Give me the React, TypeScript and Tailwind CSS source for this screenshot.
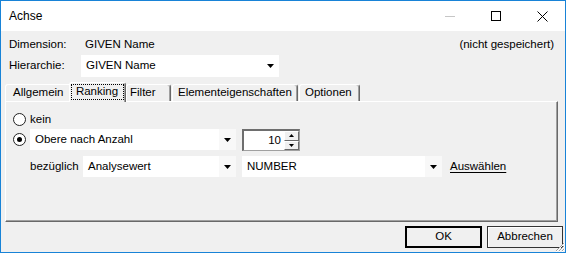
import React from "react";

function Arrow() {
  return (
    <svg width="7" height="4" viewBox="0 0 7 4">
      <path d="M0 0H7L3.5 4Z" fill="#000" />
    </svg>
  );
}

function Combo({ w, text, gray }: { w: string; text: string; gray?: boolean }) {
  return (
    <div className={`${w} h-full bg-white flex items-center`}>
      <span className="pl-[5px] flex-1 truncate">{text}</span>
      <div
        className={`w-[17px] h-full flex items-center justify-center ${
          gray ? "bg-[#f8f8f8]" : "bg-white"
        }`}
      >
        <Arrow />
      </div>
    </div>
  );
}

function Radio({ checked }: { checked?: boolean }) {
  return (
    <div className="w-[13px] h-[13px] rounded-full border border-[#222] bg-white flex items-center justify-center shrink-0">
      {checked && <div className="w-[5px] h-[5px] rounded-full bg-black" />}
    </div>
  );
}

function SpinBtn({ up }: { up?: boolean }) {
  return (
    <div className="flex-1 bg-[#f0f0f0] border-t border-l border-white border-b border-r border-b-[#696969] border-r-[#696969] flex items-center justify-center">
      <svg width="5" height="3" viewBox="0 0 5 3">
        {up ? <path d="M0 3H5L2.5 0Z" fill="#000" /> : <path d="M0 0H5L2.5 3Z" fill="#000" />}
      </svg>
    </div>
  );
}

export default function App() {
  const tab =
    "h-[17px] flex items-center border-t border-l border-white border-r border-r-[#696969] shadow-[inset_-1px_0_0_#a0a0a0] rounded-t-[3px] bg-[#f0f0f0]";
  return (
    <div className="w-[566px] h-[253px] border border-[#1883d7] bg-[#f0f0f0] flex flex-col relative overflow-hidden text-[11.5px] leading-none text-black font-['Liberation_Sans',Arial,sans-serif]">
      {/* Title bar */}
      <div className="h-[30px] bg-white flex items-center shrink-0">
        <span className="pl-[8px] text-[12px]">Achse</span>
        <div className="ml-auto flex h-full">
          <div className="w-[46px] h-full flex items-center justify-center">
            <div className="w-[10px] h-px bg-[#c6c6c6]" />
          </div>
          <div className="w-[46px] h-full flex items-center justify-center">
            <div className="w-[10px] h-[10px] border border-black" />
          </div>
          <div className="w-[46px] h-full flex items-center justify-center">
            <svg width="11" height="11" viewBox="0 0 11 11">
              <path d="M0.5 0.5L10.5 10.5M10.5 0.5L0.5 10.5" stroke="#000" strokeWidth="1" />
            </svg>
          </div>
        </div>
      </div>

      {/* Body */}
      <div className="flex-1 flex flex-col px-[4px]">
        <div className="mt-[7px] h-[14px] flex items-center pl-[4px] pr-[7px]">
          <span className="w-[76px]">Dimension:</span>
          <span>GIVEN Name</span>
          <span className="ml-auto">(nicht gespeichert)</span>
        </div>
        <div className="mt-[3px] h-[22px] flex items-center pl-[4px]">
          <span className="w-[72px]">Hierarchie:</span>
          <Combo w="w-[198px]" text="GIVEN Name" />
        </div>

        {/* Tabs */}
        <div className="mt-[5px] h-[19px] flex items-end">
          <div className={`${tab} w-[64px] pl-[7px] border-r-0 shadow-none rounded-tr-none`}>Allgemein</div>
          <div className="relative z-10 h-[20px] mb-[-1px] w-[57px] flex items-start pt-[1px] justify-center border-t border-l border-white border-r border-r-[#696969] shadow-[inset_-1px_0_0_#a0a0a0] rounded-t-[3px] bg-[#f0f0f0]">
            <span className="border border-dotted border-black pl-[4px] pr-[5px] h-[16px] flex items-center">Ranking</span>
          </div>
          <div className={`${tab} w-[45px] pl-[3px]`}>Filter</div>
          <div className={`${tab} w-[126px] pl-[5px] ml-[1px]`}>Elementeigenschaften</div>
          <div className={`${tab} w-[61px] pl-[5px] ml-[1px]`}>Optionen</div>
        </div>

        {/* Panel */}
        <div className="w-[553px] h-[121px] border-t border-l border-white border-r border-b border-r-[#696969] border-b-[#696969] shadow-[inset_-1px_-1px_0_#a0a0a0] flex flex-col">
          <div className="mt-[11px] h-[13px] flex items-center pl-[7px]">
            <Radio />
            <span className="ml-[4px]">kein</span>
          </div>
          <div className="mt-[3px] h-[22px] flex items-start pl-[7px]">
            <div className="h-[21px] flex items-center">
              <Radio checked />
            </div>
            <div className="ml-[4px] h-[21px] flex">
              <Combo w="w-[206px]" text="Obere nach Anzahl" gray />
            </div>
            <div className="ml-[6px] w-[58px] h-[22px] flex border-t-2 border-l-2 border-t-[#6e6e6e] border-l-[#6e6e6e] border-b border-r border-b-[#a0a0a0] border-r-[#a0a0a0] bg-white">
              <div className="flex-1 flex items-center justify-end pr-[3px]">10</div>
              <div className="w-[15px] flex flex-col">
                <SpinBtn up />
                <SpinBtn />
              </div>
            </div>
          </div>
          <div className="mt-[5px] h-[21px] flex items-center pl-[24px]">
            <span className="w-[53px]">bezüglich</span>
            <Combo w="w-[153px]" text="Analysewert" gray />
            <div className="ml-[6px] h-full flex">
              <Combo w="w-[200px]" text="NUMBER" gray />
            </div>
            <span className="ml-[8px] underline underline-offset-2">Auswählen</span>
          </div>
        </div>

        {/* Buttons */}
        <div className="mt-[4px] h-[22px] flex justify-end gap-[5px] mr-[-2px]">
          <div className="w-[77px] h-full border-2 border-black bg-[#f0f0f0] flex items-center justify-center">
            OK
          </div>
          <div className="w-[76px] h-full border border-[#333] shadow-[inset_1px_1px_0_#fff] bg-[#f0f0f0] flex items-center justify-center">
            Abbrechen
          </div>
        </div>
      </div>

      {/* Resize grip */}
      <svg className="absolute right-0 bottom-0" width="12" height="12" viewBox="0 0 12 12">
        <path d="M11 3L3 11M11 6L6 11M11 9L9 11" stroke="#a0a0a0" strokeWidth="1" />
        <path d="M12 3L3 12M12 6L6 12M12 9L9 12" stroke="#fff" strokeWidth="1" />
      </svg>
    </div>
  );
}
